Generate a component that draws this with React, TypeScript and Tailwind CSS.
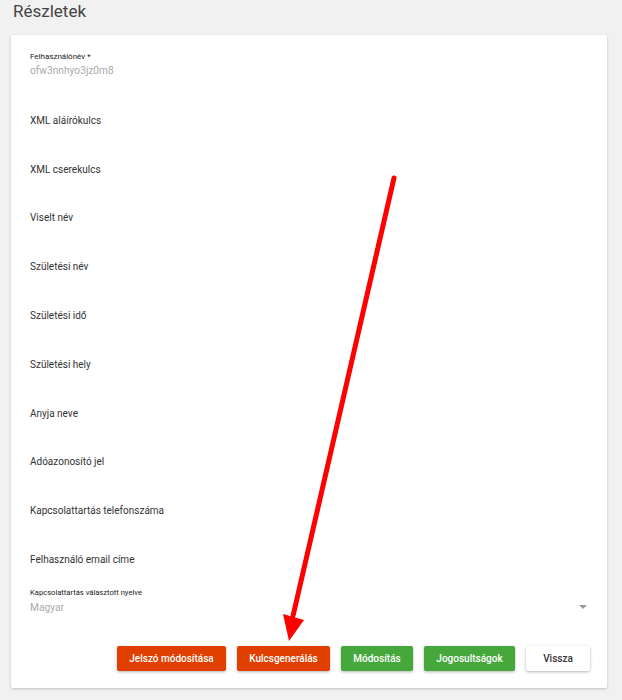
import React from "react";

const rows = [
  "XML aláírókulcs",
  "XML cserekulcs",
  "Viselt név",
  "Születési név",
  "Születési idő",
  "Születési hely",
  "Anyja neve",
  "Adóazonosító jel",
  "Kapcsolattartás telefonszáma",
  "Felhasználó email címe",
];

export default function App() {
  return (
    <div
      className="relative min-h-[700px] w-[622px] bg-[#f1f1f1] px-[11px] overflow-hidden"
      style={{ fontFamily: "Roboto, 'Liberation Sans', sans-serif" }}
    >
      <h1 className="h-[35px] pl-[2px] pt-0 text-[17px] leading-[23px] text-[#444] font-normal">
        Részletek
      </h1>
      <div className="w-[596px] bg-white rounded-[2px] shadow-[0_1px_3px_rgba(0,0,0,0.2)] pt-[17px] pb-[17px] pl-[19px] pr-[17px]">
        <div className="mb-[18px]">
          <div className="text-[8px] leading-[10px] text-[#222]">Felhasználónév *</div>
          <div className="text-[10.2px] leading-[14px] mt-[2px] text-[#aaa]">ofw3nnhyo3jz0m8</div>
        </div>
        {rows.map((r) => (
          <div key={r} className="h-[48.8px] flex items-center text-[10px] text-[#333]">
            {r}
          </div>
        ))}
        <div className="mt-[4px] flex items-end">
          <div className="flex-1">
            <div className="text-[7.6px] leading-[10px] text-[#222]">Kapcsolattartás választott nyelve</div>
            <div className="text-[10.2px] leading-[14px] mt-[3px] text-[#aaa]">Magyar</div>
          </div>
          <svg width="8" height="4" viewBox="0 0 8 4" className="mb-[6px] mr-[3px]">
            <polygon points="0,0 8,0 4,4" fill="#999" />
          </svg>
        </div>
        <div className="mt-[31px] flex justify-end gap-[11px]">
          <button className="h-[25px] w-[109px] rounded-[2px] bg-[#e03f00] text-white text-[10px] font-medium shadow-[0_1px_3px_rgba(0,0,0,0.3)]">
            Jelszó módosítása
          </button>
          <button className="h-[25px] w-[93px] rounded-[2px] bg-[#e03f00] text-white text-[10px] font-medium shadow-[0_1px_3px_rgba(0,0,0,0.3)]">
            Kulcsgenerálás
          </button>
          <button className="h-[25px] w-[72px] rounded-[2px] bg-[#46a83c] text-white text-[10px] font-medium shadow-[0_1px_3px_rgba(0,0,0,0.3)]">
            Módosítás
          </button>
          <button className="h-[25px] w-[91px] rounded-[2px] bg-[#46a83c] text-white text-[10px] font-medium shadow-[0_1px_3px_rgba(0,0,0,0.3)]">
            Jogosultságok
          </button>
          <button className="h-[25px] w-[64px] rounded-[2px] bg-white text-[#333] text-[10px] font-medium shadow-[0_1px_3px_rgba(0,0,0,0.3)]">
            Vissza
          </button>
        </div>
      </div>
      <svg className="absolute left-0 top-0 pointer-events-none" width="622" height="700">
        <line x1="394" y1="178" x2="293" y2="616" stroke="#ff0000" strokeWidth="5" strokeLinecap="round" />
        <polygon points="283,614 304,620 289,641" fill="#ff0000" />
      </svg>
    </div>
  );
}
